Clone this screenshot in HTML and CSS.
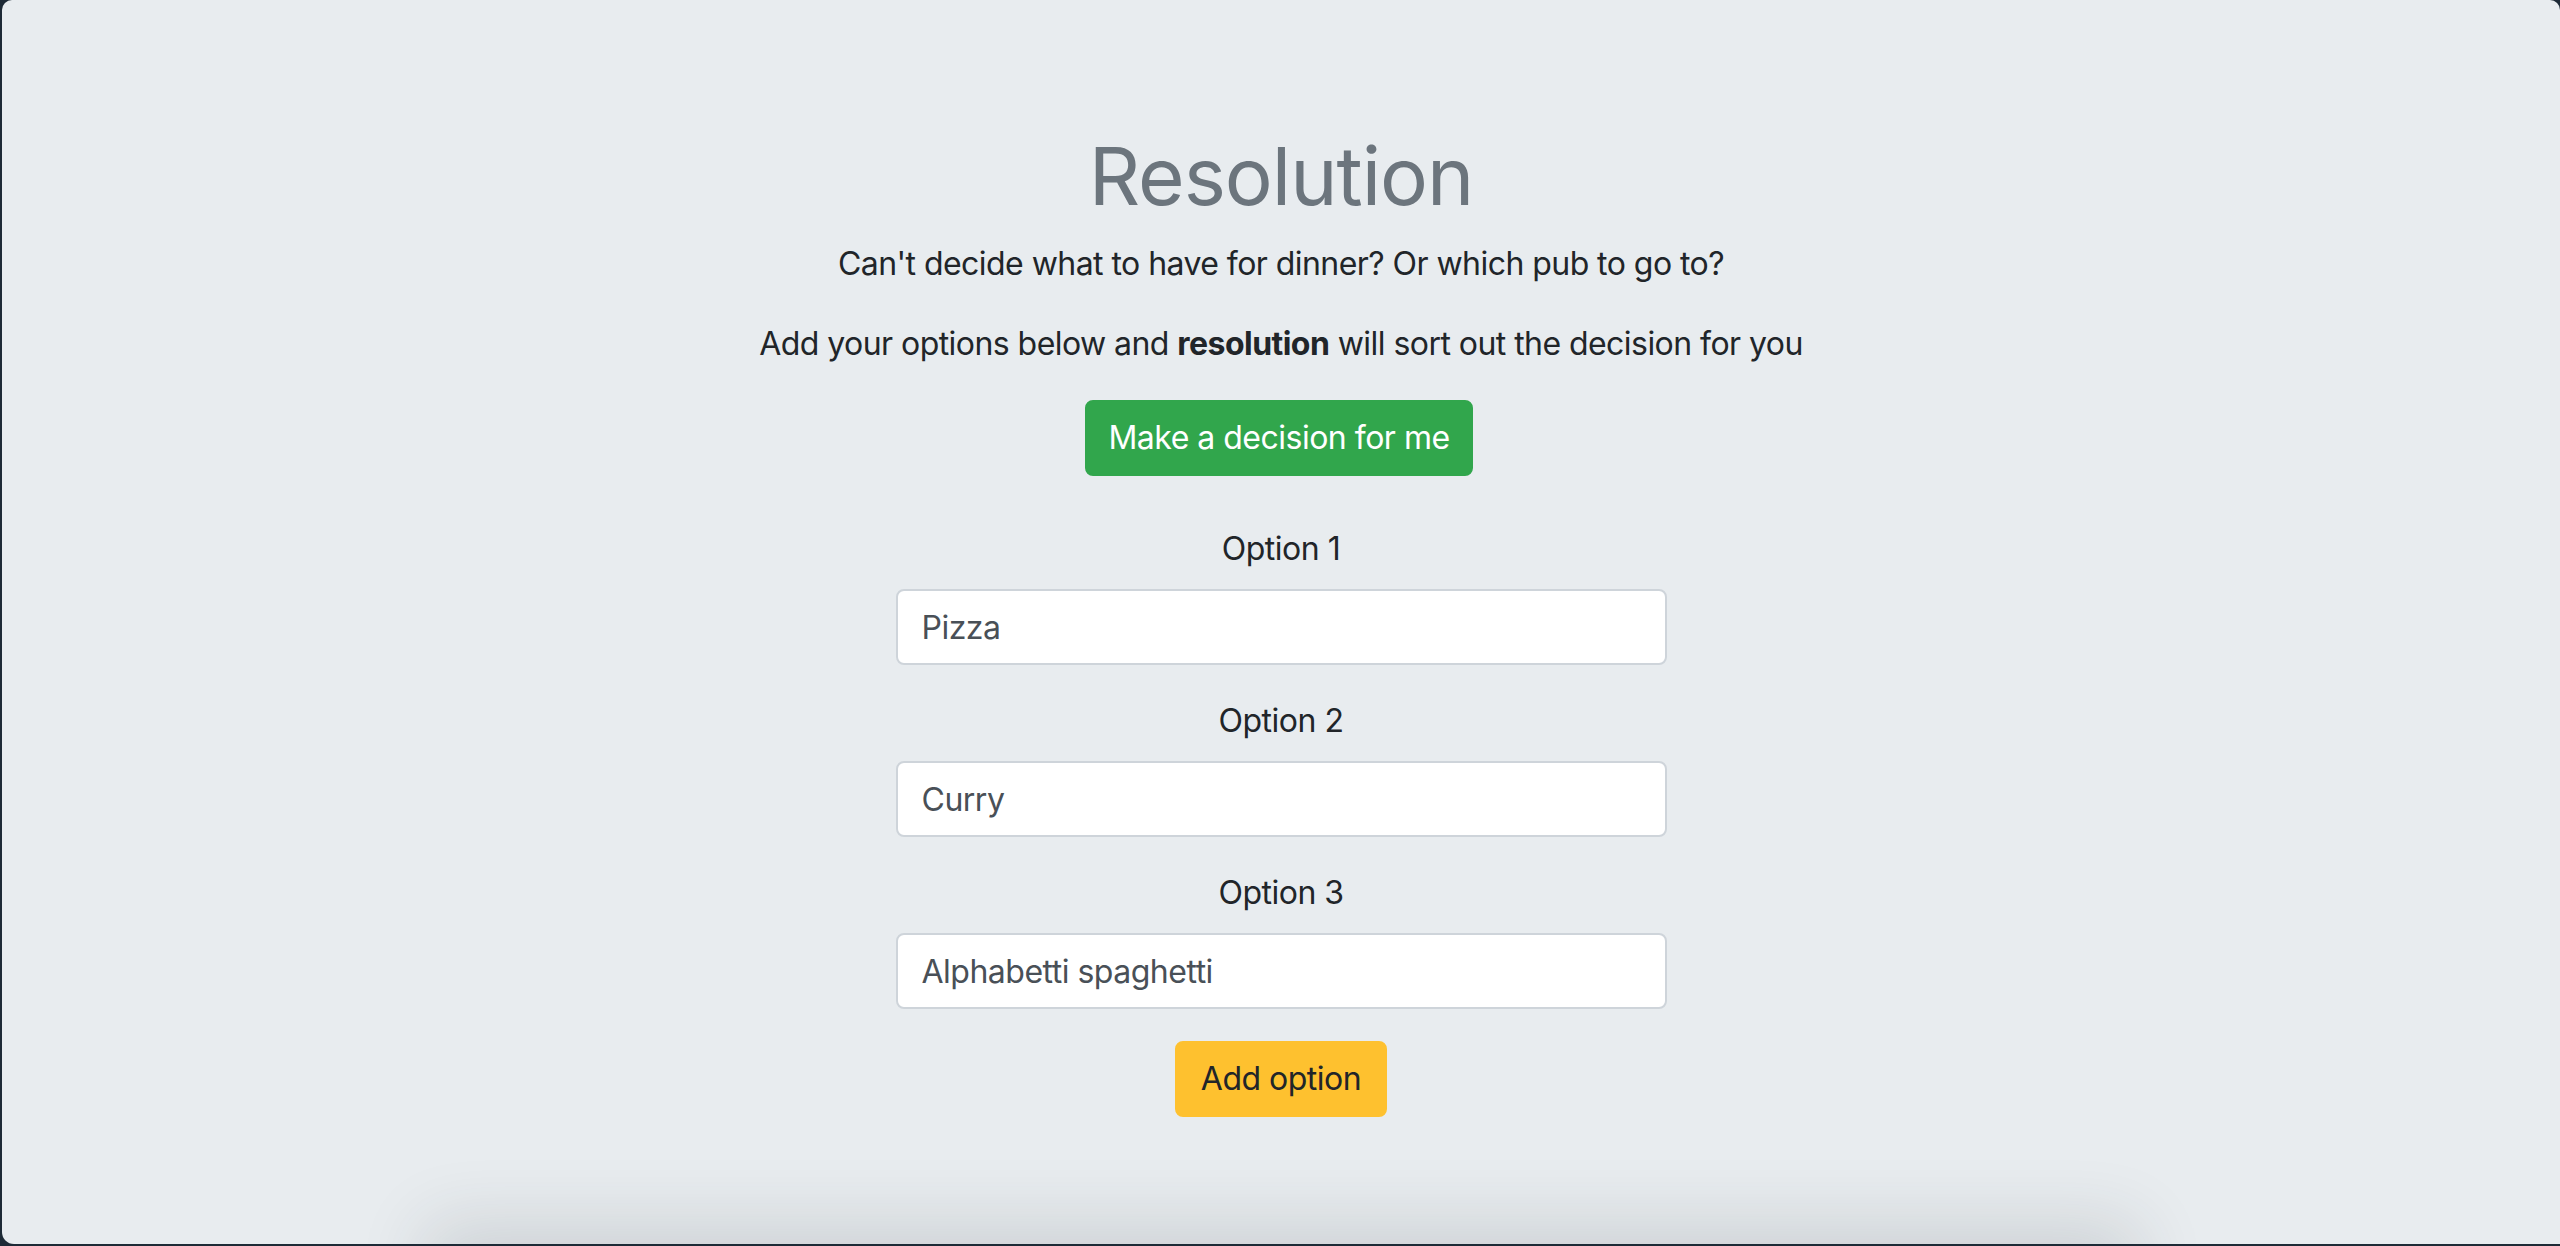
FILE: index.html
```html
<!DOCTYPE html>
<html lang="en">
<head>
<meta charset="utf-8">
<title>Resolution</title>
<link rel="stylesheet" href="styles.css">
</head>
<body>
<div class="window">
  <main class="jumbotron">
    <h1 class="title">Resolution</h1>
    <p class="lead-line">Can't decide what to have for dinner? Or which pub to go to?</p>
    <p class="lead-line">Add your options below and <strong>resolution</strong> will sort out the decision for you</p>
    <div class="decide-row">
      <button class="btn btn-success" type="button">Make a decision for me</button>
    </div>
    <form class="options">
      <div class="form-group">
        <label class="opt-label" for="o1">Option 1</label>
        <input class="form-control" id="o1" type="text" value="Pizza">
      </div>
      <div class="form-group">
        <label class="opt-label" for="o2">Option 2</label>
        <input class="form-control" id="o2" type="text" value="Curry">
      </div>
      <div class="form-group">
        <label class="opt-label" for="o3">Option 3</label>
        <input class="form-control" id="o3" type="text" value="Alphabetti spaghetti">
      </div>
      <button class="btn btn-warning" type="button">Add option</button>
    </form>
  </main>
  <div class="shade"></div>
</div>
</body>
</html>
```

FILE: styles.css
```css
html, body {
  margin: 0;
  padding: 0;
  height: 100%;
}
html {
  background: #1d2a36;
}
body {
  background: #1d2a36;
  overflow: hidden;
  font-family: Inter, "Noto Sans", "Liberation Sans", sans-serif;
  color: #212529;
}
.window {
  position: relative;
  margin-left: 2px;
  height: 1244px;
  background: #e8ecef;
  border-radius: 10px 10px 0 12px;
  overflow: hidden;
}
.jumbotron {
  padding-top: 128px;
  text-align: center;
}
.title {
  margin: 0 0 16px;
  font-size: 80px;
  line-height: 96px;
  font-weight: 400;
  color: #6c757d;
  letter-spacing: -1px;
}
.lead-line {
  margin: 0 0 32px;
  font-size: 32px;
  line-height: 48px;
  letter-spacing: -0.55px;
}
.lead-line strong {
  font-weight: 700;
}
.decide-row {
  margin-bottom: 49px;
  padding-right: 4px;
}
.btn {
  display: inline-block;
  box-sizing: border-box;
  white-space: nowrap;
  font-family: inherit;
  font-size: 32px;
  line-height: 48px;
  padding: 12px 0;
  border: 2px solid transparent;
  border-radius: 8px;
  cursor: pointer;
  letter-spacing: -0.5px;
  text-align: center;
}
.btn-success {
  background: #31a64c;
  border-color: #31a64c;
  color: #fff;
  width: 388px;
}
.btn-warning {
  background: #fec12f;
  border-color: #fec12f;
  color: #212529;
  width: 212px;
}
.options {
  width: 771px;
  margin: 0 auto;
}
.form-group {
  margin-bottom: 32px;
}
.opt-label {
  display: block;
  margin-bottom: 16px;
  font-size: 32px;
  line-height: 48px;
  letter-spacing: -0.5px;
}
.form-control {
  display: block;
  box-sizing: border-box;
  width: 100%;
  height: 76px;
  padding: 12px 24px;
  font-family: inherit;
  font-size: 32px;
  line-height: 48px;
  color: #495057;
  background: #fff;
  border: 2px solid #ced4da;
  border-radius: 8px;
  letter-spacing: -0.5px;
}
.shade {
  position: absolute;
  left: 445px;
  width: 1670px;
  top: 1244px;
  height: 60px;
  box-shadow: 0 0 70px 20px rgba(40, 50, 60, 0.14);
}
```
